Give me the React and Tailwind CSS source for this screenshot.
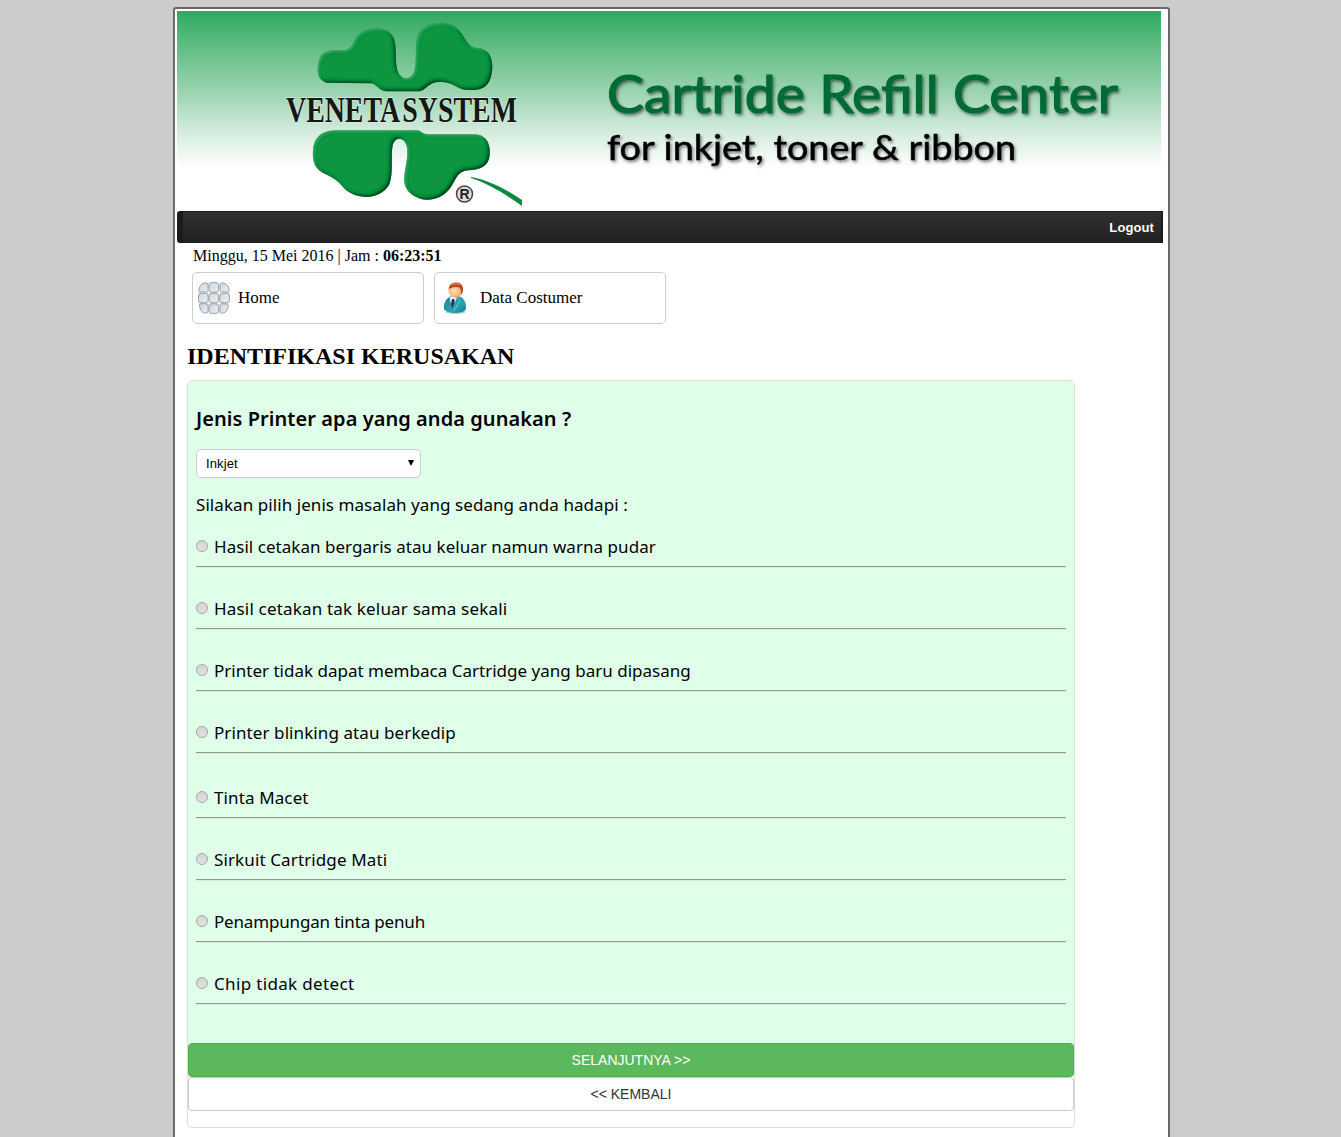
const topLeaf =
  'M170 218C140 210 140 178 146 155C152 125 175 121 205 121C255 124 245 91 265 74C285 50 345 46 366 75C383 100 374 142 380 170C385 215 430 215 435 174C441 140 433 98 446 70C465 34 535 27 564 58C588 82 587 106 615 113C650 113 668 133 667 175C664 215 650 239 612 240C555 243 560 216 510 215C470 217 470 242 445 244L350 244C322 243 322 220 302 220Z'
const bottomLeaf =
  'M200 361L440 361C455 362 455 373 475 373L615 373C648 375 662 400 659 435C656 470 630 479 595 481C558 484 558 514 538 538C505 577 455 577 425 553C396 528 401 505 407 470C412 445 413 430 411 412C404 378 371 378 367 412C362 445 371 490 357 525C330 568 265 572 225 538C200 508 193 506 166 492C128 476 126 445 130 410C138 373 165 361 200 361Z'

function Banner() {
  return (
    <svg className="block h-[200px] w-[984px]" viewBox="0 0 984 200">
      <defs>
        <linearGradient id="sky" x1="0" y1="0" x2="0" y2="1">
          <stop offset="0" stopColor="#2fa860" />
          <stop offset="0.2" stopColor="#66c088" />
          <stop offset="0.4" stopColor="#9ad3af" />
          <stop offset="0.6" stopColor="#d2ebdb" />
          <stop offset="0.78" stopColor="#ffffff" />
        </linearGradient>
        <filter id="bevel" x="-5%" y="-5%" width="110%" height="110%">
          <feGaussianBlur in="SourceAlpha" stdDeviation="1.8" result="b" />
          <feOffset in="b" dx="-1.6" dy="-1.8" result="o" />
          <feComposite in="SourceAlpha" in2="o" operator="out" result="rim" />
          <feFlood floodColor="#00391a" floodOpacity="1" />
          <feComposite in2="rim" operator="in" result="dark" />
          <feOffset in="b" dx="1.2" dy="1.4" result="p" />
          <feComposite in="SourceAlpha" in2="p" operator="out" result="rim2" />
          <feFlood floodColor="#4cb978" floodOpacity="0.6" />
          <feComposite in2="rim2" operator="in" result="light" />
          <feMerge>
            <feMergeNode in="SourceGraphic" />
            <feMergeNode in="light" />
            <feMergeNode in="dark" />
          </feMerge>
        </filter>
        <filter id="drop" x="-5%" y="-20%" width="110%" height="150%">
          <feDropShadow dx="1.5" dy="2" stdDeviation="1.6" floodColor="#000" floodOpacity="0.5" />
        </filter>
      </defs>
      <rect width="984" height="200" fill="url(#sky)" />
      <g filter="url(#bevel)" fill="#07953f">
        <path d={topLeaf} transform="translate(93 -1) scale(.33333)" />
        <path d={bottomLeaf} transform="translate(93 -1) scale(.33333)" />
      </g>
      <path d="M294 166C312 169 330 179 345 189L345 195C330 184 312 173 294 167Z" fill="#0b8a42" />
      <text x="109" y="110.500" textLength="231" lengthAdjust="spacingAndGlyphs" wordSpacing="-4" fontFamily="Liberation Serif, serif" fontWeight="700" fontSize="35" fill="#161616" stroke="#d8efe0" strokeWidth="1.500" paintOrder="stroke">VENETA SYSTEM</text>
      <circle cx="287.500" cy="183" r="8" fill="#ddd" stroke="#444" strokeWidth="1.500" />
      <text x="282.500" y="188" fontFamily="Liberation Sans, sans-serif" fontWeight="700" fontSize="14" fill="#222">R</text>
      <g filter="url(#drop)" fontFamily="Lato, sans-serif">
        <text x="430" y="101.500" textLength="511" lengthAdjust="spacingAndGlyphs" fontSize="53" fill="#046a35" stroke="#046a35" strokeWidth="1.200">Cartride Refill Center</text>
        <text x="430" y="149" textLength="409" lengthAdjust="spacingAndGlyphs" fontSize="35.500" fill="#050505" stroke="#050505" strokeWidth="0.500">for inkjet, toner &amp; ribbon</text>
      </g>
    </svg>
  )
}

function GridIcon() {
  return (
    <svg className="h-8 w-8" viewBox="0 0 32 32">
      <defs>
        <linearGradient id="tile" x1="0" y1="0" x2="1" y2="1">
          <stop offset="0" stopColor="#cfd6dc" />
          <stop offset="1" stopColor="#eceff1" />
        </linearGradient>
      </defs>
      <g fill="url(#tile)" stroke="#8f999f" strokeWidth="0.900">
        <path d="M8 1H6C3 2 1 5 .8 8.500q0 1.500 1.200 1.500H8.500q1.500 0 1.500-1.500V3Q10 1 8 1Z" />
        <rect x="11" y=".6" width="9.600" height="9.600" rx="2.500" />
        <path d="M23.500 1h2C29 2 31 5 31.200 8.500q0 1.500-1.200 1.500H23.500q-1.500 0-1.500-1.500V3Q22 1 23.500 1Z" />
        <rect x=".5" y="11.200" width="9.600" height="9.600" rx="2.500" />
        <rect x="11" y="11.200" width="9.600" height="9.600" rx="2.500" />
        <rect x="21.800" y="11.200" width="9.600" height="9.600" rx="2.500" />
        <path d="M8 31H6C3.500 30 1.800 27 1.500 23.500q0-1.700 1.200-1.700H8.500q1.500 0 1.500 1.500V29Q10 31 8 31Z" />
        <rect x="11" y="21.800" width="9.600" height="9.600" rx="2.500" />
        <path d="M23.500 31h2c3-1 4.500-4 4.800-7.500q0-1.700-1.200-1.700H23.500q-1.500 0-1.500 1.500V29q0 2 1.500 2Z" />
      </g>
    </svg>
  )
}

function PersonIcon() {
  return (
    <svg className="h-8 w-8" viewBox="0 0 32 32">
      <defs>
        <linearGradient id="coat" x1="0" y1="0" x2="1" y2="1">
          <stop offset="0" stopColor="#1d7f93" />
          <stop offset="0.6" stopColor="#2ba4b8" />
          <stop offset="1" stopColor="#167589" />
        </linearGradient>
        <radialGradient id="face" cx="0.4" cy="0.5" r="0.6">
          <stop offset="0" stopColor="#ffe0b5" />
          <stop offset="1" stopColor="#eea464" />
        </radialGradient>
      </defs>
      <ellipse cx="15.500" cy="30" rx="10" ry="1.800" fill="#a9c9d0" />
      <path d="M10 14.500C5 17 2.500 25 4.500 28C9 32 21 32 25.500 28C27 23 25 17 20 14.500Z" fill="url(#coat)" />
      <path d="M9.500 15.500L13 14.500L17 16L12 26Z" fill="#f3f7f8" />
      <path d="M12 17L14.500 17L14.500 21L12 27L11 22Z" fill="#26343e" />
      <path d="M18 15L20 18L14 29" fill="none" stroke="#70d5df" strokeWidth=".8" />
      <circle cx="15.500" cy="8.500" r="7" fill="url(#face)" />
      <path d="M8.800 7C9-1 21-1.500 22.500 4.500C23.500 8 23 11 21 13Q21.500 8 19.500 5.500Q14 4 8.800 7Z" fill="#bd4517" />
      <path d="M12 3Q16 0 20 3" fill="none" stroke="#ef9160" />
    </svg>
  )
}

const problems = [
  { text: 'Hasil cetakan bergaris atau keluar namun warna pudar', row: 'mb-[29px]', spacing: 'tracking-[0.04px]' },
  { text: 'Hasil cetakan tak keluar sama sekali', row: 'mb-[29px]', spacing: 'tracking-[0.18px]' },
  { text: 'Printer tidak dapat membaca Cartridge yang baru dipasang', row: 'mb-[29px]', spacing: 'tracking-[0.01px]' },
  { text: 'Printer blinking atau berkedip', row: 'mb-[32px]', spacing: 'tracking-[0.09px]' },
  { text: 'Tinta Macet', row: 'mb-[29px]', spacing: 'tracking-[0.12px]' },
  { text: 'Sirkuit Cartridge Mati', row: 'mb-[29px]', spacing: 'tracking-[0.12px]' },
  { text: 'Penampungan tinta penuh', row: 'mb-[29px]', spacing: 'tracking-[-0.17px]' },
  { text: 'Chip tidak detect', row: 'mb-[29px]', spacing: 'tracking-[0.34px]' },
]

const menu = [
  { label: 'Home', Icon: GridIcon },
  { label: 'Data Costumer', Icon: PersonIcon },
]

export default function App() {
  return (
    <div className="h-[1137px] overflow-hidden bg-[#ccc] pt-[7px] font-['Liberation_Serif',serif] text-black">
      <div className="ml-[173px] h-[1140px] w-[997px] rounded-[3px] border-2 border-[#686868] bg-white px-[2px] pt-[2px]">
        <Banner />
        <nav className="flex h-8 w-[986px] items-center justify-end rounded-l-[3px] border-l-[6px] border-r-2 border-t border-b border-[#1c1c1c] bg-linear-to-b from-[#303030] to-[#222] pr-[7px] pt-px font-['Liberation_Sans',sans-serif] text-[13px] font-bold text-white">
          <span className="tracking-[0.1px]">Logout</span>
        </nav>
        <p className="ml-4 mt-[4px] h-[18px] text-[16px] leading-[18px]">
          Minggu, 15 Mei 2016 | Jam : <b>06:23:51</b>
        </p>
        <div className="ml-[15px] mt-[7px] flex gap-[10px]">
          {menu.map(({ label, Icon }) => (
            <a key={label} className="flex h-[52px] w-[232px] items-center gap-2 rounded-[5px] border border-[#ccc] pl-[5px] text-[17px]">
              <Icon />
              {label}
            </a>
          ))}
        </div>
        <h2 className="ml-[10px] mt-[18px] h-7 text-[24px] leading-7 font-bold">IDENTIFIKASI KERUSAKAN</h2>
        <section className="ml-[10px] mt-[10px] h-[748px] w-[888px] rounded-[5px] border border-[#ddd]">
          <div className="h-[662px] rounded-t-[4px] bg-[#e0ffe8] px-2 pt-[26px] font-['Noto_Sans',sans-serif] text-[17px]">
            <h3 className="h-6 text-[20px] leading-6 font-semibold tracking-[0.06px] whitespace-nowrap">Jenis Printer apa yang anda gunakan ?</h3>
            <div className="mt-[18px] flex h-[29px] w-[225px] items-center justify-between rounded-[5px] border border-[#ccc] bg-white pl-[9px] pr-[6px] font-['Liberation_Sans',sans-serif] text-[13px]">
              <span className="tracking-[0.1px]">Inkjet</span>
              <svg className="-mt-px h-[6px] w-[6px]" viewBox="0 0 6 6"><path d="M0 0H6L3 6Z" /></svg>
            </div>
            <p className="mt-[15px] mb-[18px] h-6 leading-6 tracking-[0.07px] whitespace-nowrap">Silakan pilih jenis masalah yang sedang anda hadapi :</p>
            {problems.map((p) => (
              <div key={p.text} className={p.row}>
                <label className="flex h-[31px] items-start gap-[6px] leading-6 whitespace-nowrap">
                  <span className="mt-[5px] h-3 w-3 rounded-full border border-[#a5a5a5] bg-linear-to-b from-[#d5d5d5] to-[#e2e2e2]" />
                  <span className={p.spacing}>{p.text}</span>
                </label>
                <hr className="h-[2px] border-t border-b border-t-[#8f9b91] border-b-[#d8eedd]" />
              </div>
            ))}
          </div>
          <button className="block h-[34px] w-full rounded-[4px] border border-[#4cae4c] bg-[#5cb85c] font-['Liberation_Sans',sans-serif] text-[14px] text-white">SELANJUTNYA &gt;&gt;</button>
          <button className="block h-[34px] w-full rounded-[4px] border border-[#ccc] bg-white font-['Liberation_Sans',sans-serif] text-[14px] text-[#333]">&lt;&lt; KEMBALI</button>
        </section>
      </div>
    </div>
  )
}
